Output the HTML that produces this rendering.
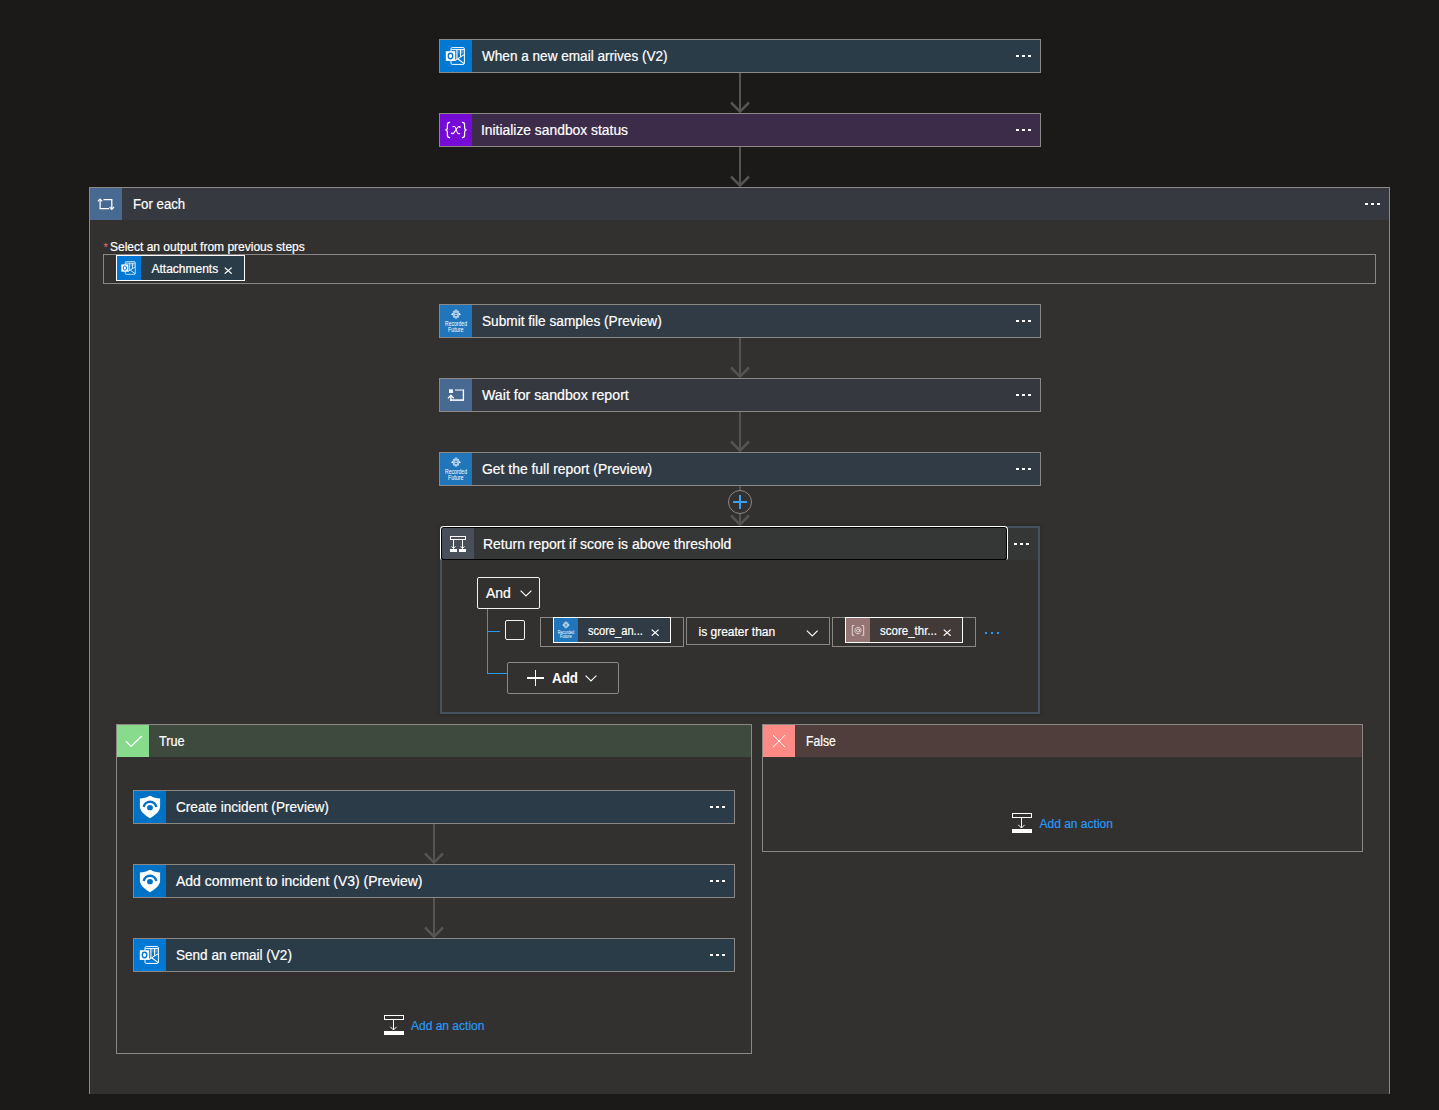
<!DOCTYPE html>
<html>
<head>
<meta charset="utf-8">
<title>Logic app designer</title>
<style>
html,body{margin:0;padding:0;}
body{-webkit-text-stroke:.2px currentColor;width:1439px;height:1110px;background:#1b1a19;position:relative;overflow:hidden;font-family:"Liberation Sans",sans-serif;color:#fff;}
.abs{position:absolute;}
.card{position:absolute;width:602px;height:34px;box-sizing:border-box;border:1px solid #8b8785;}
.card .ico{position:absolute;left:0;top:0;width:32px;height:32px;}
.card .ttl{position:absolute;left:42px;top:0;height:32px;line-height:32px;font-size:14px;white-space:nowrap;color:#fff;transform-origin:0 50%;}
.dots{position:absolute;width:14px;height:2px;}
.dots i{position:absolute;top:0;width:2.600px;height:2px;background:#fff;margin-left:-.700px;}
.dots i:nth-child(1){left:0}.dots i:nth-child(2){left:6px}.dots i:nth-child(3){left:12px}
.card .dots{right:9px;top:15px;}
.arrow{position:absolute;width:22px;}
.box{position:absolute;box-sizing:border-box;border:1px solid #8b8785;}
svg{display:block;}
.link{color:#2899f5;font-size:12px;white-space:nowrap;}
.tok{position:absolute;box-sizing:border-box;border:1px solid #fff;height:26px;}
.tok .ti{position:absolute;left:0;top:0;width:24px;height:24px;}
.tok .tt{position:absolute;top:0;line-height:24px;font-size:12px;white-space:nowrap;color:#fff;transform-origin:0 50%;}
</style>
</head>
<body>

<svg width="0" height="0" style="position:absolute">
<defs>
  <!-- Outlook icon 32x32 -->
  <symbol id="i-outlook" viewBox="0 0 32 32">
    <rect x="11" y="7.6" width="13.4" height="16.8" rx="1.2" fill="none" stroke="#fff" stroke-width="1"/>
    <path d="M11.5 9.6H24" stroke="#fff" stroke-width="1" fill="none"/>
    <path d="M16.9 9.6V19.5M20.6 9.6V17" stroke="#fff" stroke-width="1.1" fill="none"/>
    <rect x="17.5" y="10.4" width="2.5" height="3" fill="#fff" opacity=".18"/>
    <rect x="21.2" y="10.4" width="2.6" height="3" fill="#fff" opacity=".28"/>
    <path d="M14.8 20.6L24.2 14.6M18 19L24.2 23.6" stroke="#fff" stroke-width="1.1" fill="none"/>
    <rect x="5.8" y="11.2" width="9.4" height="9.7" fill="#fff"/>
    <ellipse cx="10.5" cy="16" rx="2.25" ry="2.75" fill="none" stroke="#0078d4" stroke-width="1.3"/>
  </symbol>
  <!-- Variable {x} 32x32 -->
  <symbol id="i-var" viewBox="0 0 32 32">
    <path d="M9.6 8.4C7.6 8.4 7.4 9.4 7.4 11v2.6c0 1.6-.6 2.3-2 2.4 1.4.1 2 .8 2 2.4V21c0 1.6.2 2.6 2.2 2.6" fill="none" stroke="#fff" stroke-width="1.2" stroke-linecap="round"/>
    <path d="M22.4 8.4c2 0 2.2 1 2.2 2.6v2.6c0 1.6.6 2.3 2 2.4-1.4.1-2 .8-2 2.4V21c0 1.6-.2 2.6-2.2 2.6" fill="none" stroke="#fff" stroke-width="1.2" stroke-linecap="round"/>
    <path d="M13 12.6c1.6-.6 2.2.2 2.8 1.8l1.3 3.8c.5 1.4 1.100 2 2.6 1.300" fill="none" stroke="#fff" stroke-width="1.05" stroke-linecap="round"/>
    <path d="M20.100 13.100c-.9-.9-1.900-.5-2.900.900l-3.100 4.600c-.9 1.300-1.800 1.500-2.700.800" fill="none" stroke="#fff" stroke-width="1.05" stroke-linecap="round"/>
    <circle cx="19.700" cy="13" r=".8" fill="#fff"/><circle cx="11.900" cy="19.300" r=".8" fill="#fff"/>
  </symbol>
  <!-- For each 32x32 -->
  <symbol id="i-foreach" viewBox="0 0 32 32">
    <path d="M10.100 11.300V20.600H19.200M13.500 11.700H21.800V21" fill="none" stroke="#fff" stroke-width="1.250"/>
    <path d="M7.900 13.400L10.100 11.100L12.300 13.400M19.600 19L21.800 21.300L24 19" fill="none" stroke="#fff" stroke-width="1.150"/>
  </symbol>
  <!-- Recorded Future 32x32 -->
  <symbol id="i-rf" viewBox="0 0 32 32">
    <path d="M16 4.100L17.300 5.600L19 6L19.100 7.800L21 9.200L19.100 10.600L19 12.400L17.300 12.800L16 14.300L14.700 12.800L13 12.400L12.900 10.600L11 9.200L12.900 7.800L13 6L14.700 5.600Z" fill="#a9cde9"/>
    <path d="M11 9.200L12.900 8.500V9.900ZM21 9.200L19.100 8.500V9.900Z" fill="#fff"/>
    <rect x="14.800" y="7.900" width="2.400" height=".9" fill="#2175bb"/>
    <rect x="14.800" y="10" width="2.400" height=".9" fill="#2175bb"/>
    <text x="16" y="21.300" font-family="Liberation Sans, sans-serif" font-size="6.600" fill="#fff" text-anchor="middle" textLength="22" lengthAdjust="spacingAndGlyphs">Recorded</text>
    <text x="15.800" y="27" font-family="Liberation Sans, sans-serif" font-size="6.600" fill="#fff" text-anchor="middle" textLength="15.600" lengthAdjust="spacingAndGlyphs">Future</text>
    <circle cx="24.300" cy="22.500" r=".35" fill="#fff" opacity=".7"/>
  </symbol>
  <!-- Scope 32x32 -->
  <symbol id="i-scope" viewBox="0 0 32 32">
    <rect x="9" y="10.300" width="3.900" height="3.700" fill="#fff"/>
    <path d="M15 11.100H22.800" fill="none" stroke="#fff" stroke-width="1.700" opacity=".6"/>
    <path d="M23.400 10.300V21.100" fill="none" stroke="#fff" stroke-width="1.350"/>
    <path d="M24.050 21.100H10.200" fill="none" stroke="#fff" stroke-width="1.700" opacity=".92"/>
    <path d="M10.900 21.900V16.600" fill="none" stroke="#fff" stroke-width="1.400"/>
    <path d="M8 19.400L10.900 16.300L13.800 19.400" fill="none" stroke="#fff" stroke-width="1.300"/>
  </symbol>
  <!-- Condition 32x32 -->
  <symbol id="i-cond" viewBox="0 0 32 32">
    <rect x="8.500" y="8.500" width="15" height="3" fill="none" stroke="#fff" stroke-width="1"/>
    <path d="M11.500 12V20.500M20.500 12V20.500" stroke="#fff" stroke-width="1" fill="none"/>
    <path d="M9.500 18.300L11.500 20.500L13.500 18.300M18.500 18.300L20.500 20.500L22.500 18.300" stroke="#fff" stroke-width=".9" fill="none"/>
    <rect x="8" y="21" width="7" height="3" fill="#fff"/>
    <rect x="17" y="21" width="7" height="3" fill="#fff"/>
  </symbol>
  <!-- Sentinel 32x32 -->
  <symbol id="i-sentinel" viewBox="0 0 32 32">
    <path d="M14.600 5.300Q16 4.200 17.400 5.300C19.400 6.700 22.300 7.400 26.100 7.600V15.500C26.100 20 21.500 24.200 16 27.200C10.500 24.200 5.900 20 5.900 15.500V7.600C9.700 7.400 12.600 6.700 14.600 5.300Z" fill="#fff"/>
    <path d="M9.700 16A6.400 6.400 0 0 1 22.300 16" fill="none" stroke="#0072c6" stroke-width="2.300"/>
    <ellipse cx="16" cy="16.700" rx="2.900" ry="2.600" fill="#0072c6"/>
  </symbol>
  <!-- Add action 20x20 -->
  <symbol id="i-addact" viewBox="0 0 20 20">
    <rect x=".5" y=".5" width="19" height="4" fill="none" stroke="#fff" stroke-width="1"/>
    <path d="M9.500 5V15" stroke="#fff" stroke-width="1" fill="none"/>
    <path d="M6.300 11.800L9.500 15L12.700 11.800" stroke="#fff" stroke-width="1" fill="none"/>
    <rect x="0" y="16" width="20" height="4" fill="#fff"/>
  </symbol>
  <!-- Down arrow 22 x 40 (line 2px) -->
  <symbol id="i-arrow" viewBox="0 0 22 40">
    <path d="M11 0V38.500" stroke="#555453" stroke-width="2" fill="none"/>
    <path d="M2 29.500L11 38.600L20 29.500" stroke="#555453" stroke-width="2.500" fill="none"/>
  </symbol>
  <!-- small x -->
  <symbol id="i-x" viewBox="0 0 8 8" preserveAspectRatio="none">
    <path d="M.7 .7L7.300 7.300M7.300 .7L.7 7.300" stroke="#fff" stroke-width="1.150" fill="none"/>
  </symbol>
  <!-- chevron down 12x7 -->
  <symbol id="i-chev" viewBox="0 0 12 7">
    <path d="M.6 .6L6 6L11.400 .6" stroke="#fff" stroke-width="1.100" fill="none"/>
  </symbol>
</defs>
</svg>

<!-- ============ TOP CARDS ============ -->
<div class="card" style="left:439px;top:39px;background:#2b3c49;">
  <div class="ico" style="background:#0078d4;"><svg width="32" height="32"><use href="#i-outlook"/></svg></div>
  <div class="ttl" style="transform:scaleX(.9696)">When a new email arrives (V2)</div>
  <div class="dots"><i></i><i></i><i></i></div>
</div>

<div class="card" style="left:439px;top:113px;background:#3c2b49;">
  <div class="ico" style="background:#770bd6;"><svg width="32" height="32"><use href="#i-var"/></svg></div>
  <div class="ttl" style="left:41px;transform:scaleX(.989)">Initialize sandbox status</div>
  <div class="dots"><i></i><i></i><i></i></div>
</div>


<!-- arrows top -->
<svg class="arrow" style="left:729px;top:73px;" width="22" height="40"><use href="#i-arrow"/></svg>
<svg class="arrow" style="left:729px;top:147px;" width="22" height="40"><use href="#i-arrow"/></svg>

<!-- ============ FOR EACH ============ -->
<div class="abs" style="left:89px;top:187px;width:1301px;height:907px;box-sizing:border-box;border:1px solid #8b8785;border-bottom:none;background:#323130;">
</div>
<div class="abs" style="left:90px;top:188px;width:1299px;height:32px;background:#36393f;">
  <div class="abs" style="left:0;top:0;width:32px;height:32px;background:#486991;"><svg width="32" height="32"><use href="#i-foreach"/></svg></div>
  <div class="abs" style="left:42.500px;top:0;line-height:32px;font-size:14px;white-space:nowrap;transform-origin:0 50%;transform:scaleX(.945)">For each</div>
  <div class="dots" style="right:9px;top:15px;"><i></i><i></i><i></i></div>
</div>

<!-- foreach input -->
<div class="abs" style="left:103.400px;top:240.800px;color:#f1707b;font-size:11px;line-height:12px;-webkit-text-stroke:0;">*</div>
<div class="abs" id="lbl" style="left:110px;top:239px;line-height:16px;font-size:12px;white-space:nowrap;">Select an output from previous steps</div>
<div class="box" style="left:103px;top:254px;width:1273px;height:30px;"></div>
<div class="tok" style="left:116px;top:255px;width:129px;background:#2b3c49;">
  <div class="ti" style="background:#0078d4;"><svg width="24" height="24" viewBox="0 0 32 32"><use href="#i-outlook"/></svg></div>
  <div class="tt" style="left:34.500px;top:1px;">Attachments</div>
  <svg class="abs" style="left:107.300px;top:10.800px;" width="8.400" height="7.400"><use href="#i-x"/></svg>
</div>

<!-- foreach inner cards -->
<div class="card" style="left:439px;top:304px;background:#303b45;">
  <div class="ico" style="background:#2175bb;"><svg width="32" height="32"><use href="#i-rf"/></svg></div>
  <div class="ttl" style="transform:scaleX(.9745)">Submit file samples (Preview)</div>
  <div class="dots"><i></i><i></i><i></i></div>
</div>
<svg class="arrow" style="left:729px;top:338px;" width="22" height="40"><use href="#i-arrow"/></svg>
<div class="card" style="left:439px;top:378px;background:#35393f;">
  <div class="ico" style="background:#486991;"><svg width="32" height="32"><use href="#i-scope"/></svg></div>
  <div class="ttl" style="transform:scaleX(1.0124)">Wait for sandbox report</div>
  <div class="dots"><i></i><i></i><i></i></div>
</div>
<svg class="arrow" style="left:729px;top:412px;" width="22" height="40"><use href="#i-arrow"/></svg>
<div class="card" style="left:439px;top:452px;background:#303b45;">
  <div class="ico" style="background:#2175bb;"><svg width="32" height="32"><use href="#i-rf"/></svg></div>
  <div class="ttl" style="transform:scaleX(.9936)">Get the full report (Preview)</div>
  <div class="dots"><i></i><i></i><i></i></div>
</div>
<svg class="arrow" style="left:729px;top:486px;" width="22" height="40"><use href="#i-arrow"/></svg>
<!-- plus circle -->
<div class="abs" style="left:728px;top:490px;width:24px;height:24px;box-sizing:border-box;border:1px solid #8a8886;border-radius:50%;background:#323130;"></div>
<div class="abs" style="left:733px;top:501px;width:14px;height:2px;background:#3a9ff0;"></div>
<div class="abs" style="left:739px;top:495px;width:2px;height:14px;background:#3a9ff0;"></div>


<!-- condition container (2px slate border) -->
<div class="abs" style="left:440px;top:526px;width:600px;height:188px;box-sizing:border-box;border:2px solid #47525f;background:#323130;box-shadow:0 0 4px rgba(0,0,0,.25);"></div>
<!-- header strip (unfocused part w/ dots) -->
<div class="abs" style="left:442px;top:528px;width:596px;height:32px;background:#353636;"></div>
<div class="dots" style="left:1015px;top:543px;"><i></i><i></i><i></i></div>
<!-- focused header -->
<div class="abs" style="left:440px;top:526px;width:568px;height:34px;box-sizing:border-box;border:1px solid #fff;border-bottom:none;border-radius:4px 4px 2px 2px;background:#000;overflow:hidden;">
  <div class="abs" style="left:1.400px;top:1.400px;right:1.400px;bottom:1.300px;border-radius:2px;background:#353636;overflow:hidden;">
    <div class="abs" style="left:-0.400px;top:-0.400px;width:32px;height:32px;background:#484f58;"><svg width="32" height="32"><use href="#i-cond"/></svg></div>
    <div class="abs" id="ct" style="left:40.600px;top:-0.400px;line-height:32px;font-size:14px;white-space:nowrap;transform-origin:0 50%;transform:scaleX(.997)">Return report if score is above threshold</div>
  </div>
</div>

<!-- And dropdown -->
<div class="abs" style="left:477px;top:577px;width:63px;height:32px;box-sizing:border-box;border:1px solid #f3f2f1;border-radius:2px;"></div>
<div class="abs" style="left:486px;top:578px;line-height:30px;font-size:14px;">And</div>
<svg class="abs" style="left:520px;top:589.500px;" width="12" height="7"><use href="#i-chev"/></svg>
<!-- tree lines -->
<div class="abs" style="left:487px;top:609px;width:1px;height:65px;background:#2899f5;"></div>
<div class="abs" style="left:487px;top:631px;width:13px;height:1px;background:#2899f5;"></div>
<div class="abs" style="left:487px;top:673px;width:20px;height:1px;background:#2899f5;"></div>
<!-- checkbox -->
<div class="abs" style="left:505px;top:620px;width:20px;height:20px;box-sizing:border-box;border:1px solid #f3f2f1;border-radius:2px;"></div>
<!-- input 1 -->
<div class="box" style="left:540px;top:617px;width:144px;height:30px;"></div>
<div class="tok" style="left:553px;top:617px;width:118px;height:26px;background:#303b45;">
  <div class="ti" style="background:#2175bb;"><svg width="24" height="24" viewBox="0 0 32 32"><use href="#i-rf"/></svg></div>
  <div class="tt" style="left:34px;top:.5px;transform:scaleX(.924)">score_an...</div>
  <svg class="abs" style="left:96.700px;top:10.800px;" width="8.400" height="7.400"><use href="#i-x"/></svg>
</div>
<!-- operator dropdown -->
<div class="box" style="left:686px;top:617px;width:144px;height:28px;"></div>
<div class="abs" style="left:698.500px;top:619px;line-height:27px;font-size:12px;white-space:nowrap;">is greater than</div>
<svg class="abs" style="left:806.300px;top:629.500px;" width="12.500" height="7"><use href="#i-chev"/></svg>
<!-- input 2 -->
<div class="box" style="left:832px;top:617px;width:144px;height:30px;"></div>
<div class="tok" style="left:845px;top:617px;width:118px;height:26px;background:#413a38;">
  <div class="ti" style="background:#957474;"><svg width="24" height="24"><path d="M8.300 7.500H6.300V17.300H8.300M15.700 7.500H17.700V17.300H15.700" fill="none" stroke="#eadfdf" stroke-width=".9"/><circle cx="12" cy="12.500" r="1.500" fill="none" stroke="#eadfdf" stroke-width=".8"/><path d="M13.500 11V13.300C13.500 14.300 15.100 14.300 15.100 12.400C15.100 10.500 13.800 9.300 12 9.300C10.200 9.300 8.900 10.700 8.900 12.500C8.900 14.300 10.200 15.700 12 15.700C12.800 15.700 13.500 15.500 14 15.100" fill="none" stroke="#eadfdf" stroke-width=".8"/></svg></div>
  <div class="tt" style="left:34px;top:.5px;transform:scaleX(.959)">score_thr...</div>
  <svg class="abs" style="left:96.800px;top:10.800px;" width="8.400" height="7.400"><use href="#i-x"/></svg>
</div>
<!-- blue dots -->
<div class="dots" style="left:985.300px;top:632px;"><i style="background:#2899f5"></i><i style="background:#2899f5"></i><i style="background:#2899f5"></i></div>
<!-- Add button -->
<div class="box" style="left:507px;top:662px;width:112px;height:32px;border-radius:2px;"></div>
<div class="abs" style="left:527px;top:677.400px;width:16.600px;height:1.200px;background:#fff;"></div>
<div class="abs" style="left:534.700px;top:670px;width:1.200px;height:16px;background:#fff;"></div>
<div class="abs" style="left:552px;top:663px;line-height:30px;font-size:14px;font-weight:bold;-webkit-text-stroke:0;transform-origin:0 50%;transform:scaleX(.955)">Add</div>
<svg class="abs" style="left:585px;top:675px;" width="12" height="7"><use href="#i-chev"/></svg>


<!-- TRUE -->
<div class="box" style="left:116px;top:724px;width:636px;height:330px;"></div>
<div class="abs" style="left:117px;top:725px;width:634px;height:32px;background:#3f4a3e;">
  <div class="abs" style="left:0;top:0;width:32px;height:32px;background:#88da8d;">
    <svg width="32" height="32"><path d="M8.900 16.200L14.100 21.400L24.900 11" fill="none" stroke="#fff" stroke-width="1.200"/></svg>
  </div>
  <div class="abs" style="left:42.300px;top:0;line-height:32px;font-size:14px;transform-origin:0 50%;transform:scaleX(.908)">True</div>
</div>
<div class="card" style="left:133px;top:790px;background:#2b3b47;">
  <div class="ico" style="background:#0072c6;"><svg width="32" height="32"><use href="#i-sentinel"/></svg></div>
  <div class="ttl" style="transform:scaleX(.9726)">Create incident (Preview)</div>
  <div class="dots"><i></i><i></i><i></i></div>
</div>
<svg class="arrow" style="left:423px;top:824px;" width="22" height="40"><use href="#i-arrow"/></svg>
<div class="card" style="left:133px;top:864px;background:#2b3b47;">
  <div class="ico" style="background:#0072c6;"><svg width="32" height="32"><use href="#i-sentinel"/></svg></div>
  <div class="ttl" style="transform:scaleX(.996)">Add comment to incident (V3) (Preview)</div>
  <div class="dots"><i></i><i></i><i></i></div>
</div>
<svg class="arrow" style="left:423px;top:898px;" width="22" height="40"><use href="#i-arrow"/></svg>
<div class="card" style="left:133px;top:938px;background:#2b3c49;">
  <div class="ico" style="background:#0078d4;"><svg width="32" height="32"><use href="#i-outlook"/></svg></div>
  <div class="ttl" style="transform:scaleX(.967)">Send an email (V2)</div>
  <div class="dots"><i></i><i></i><i></i></div>
</div>
<svg class="abs" style="left:384px;top:1015px;" width="20" height="20"><use href="#i-addact"/></svg>
<div class="abs link" style="left:411px;top:1018px;line-height:16px;">Add an action</div>

<!-- FALSE -->
<div class="box" style="left:762px;top:724px;width:601px;height:128px;"></div>
<div class="abs" style="left:763px;top:725px;width:599px;height:32px;background:#503e3c;">
  <div class="abs" style="left:0;top:0;width:32px;height:32px;background:#fd8a84;">
    <svg width="32" height="32"><path d="M10 10L22.200 22.200M22.200 10L10 22.200" fill="none" stroke="#fff" stroke-width="1"/></svg>
  </div>
  <div class="abs" style="left:43px;top:0;line-height:32px;font-size:14px;transform-origin:0 50%;transform:scaleX(.868)">False</div>
</div>
<svg class="abs" style="left:1012px;top:813px;" width="20" height="20"><use href="#i-addact"/></svg>
<div class="abs link" style="left:1039.500px;top:816px;line-height:16px;">Add an action</div>


</body>
</html>
